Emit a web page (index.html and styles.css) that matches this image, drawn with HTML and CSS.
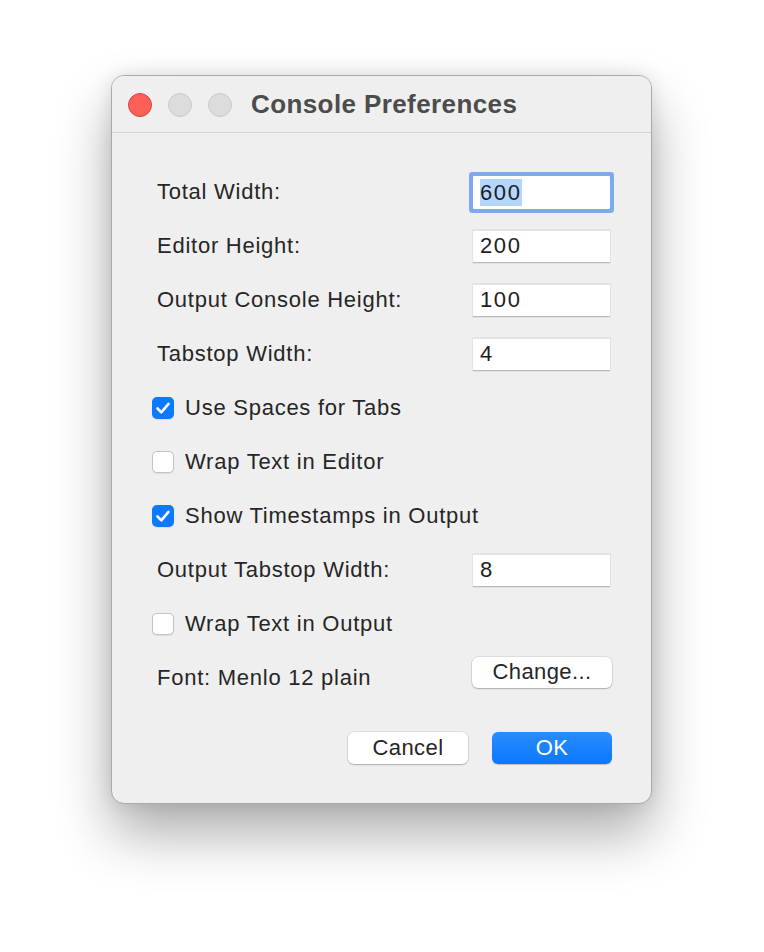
FILE: index.html
```html
<!DOCTYPE html>
<html>
<head>
<meta charset="utf-8">
<link rel="stylesheet" href="styles.css">
</head>
<body>
<div class="window">
  <div class="titlebar">
    <div class="lights">
      <span class="light red"></span>
      <span class="light gray"></span>
      <span class="light gray"></span>
    </div>
    <div class="title">Console Preferences</div>
  </div>
  <div class="content">
    <div class="row">
      <span class="label">Total Width:</span>
      <div class="field focused"><span class="sel">600</span></div>
    </div>
    <div class="row">
      <span class="label">Editor Height:</span>
      <div class="field">200</div>
    </div>
    <div class="row">
      <span class="label">Output Console Height:</span>
      <div class="field">100</div>
    </div>
    <div class="row">
      <span class="label">Tabstop Width:</span>
      <div class="field">4</div>
    </div>
    <div class="row check-row">
      <span class="box checked"><svg viewBox="0 0 22 22" width="22" height="22"><path d="M5.5 11.5 L9.3 15.3 L16.5 6.8" fill="none" stroke="#fff" stroke-width="2.6" stroke-linecap="round" stroke-linejoin="round"/></svg></span>
      <span class="label">Use Spaces for Tabs</span>
    </div>
    <div class="row check-row">
      <span class="box"></span>
      <span class="label">Wrap Text in Editor</span>
    </div>
    <div class="row check-row">
      <span class="box checked"><svg viewBox="0 0 22 22" width="22" height="22"><path d="M5.5 11.5 L9.3 15.3 L16.5 6.8" fill="none" stroke="#fff" stroke-width="2.6" stroke-linecap="round" stroke-linejoin="round"/></svg></span>
      <span class="label">Show Timestamps in Output</span>
    </div>
    <div class="row">
      <span class="label">Output Tabstop Width:</span>
      <div class="field">8</div>
    </div>
    <div class="row check-row">
      <span class="box"></span>
      <span class="label">Wrap Text in Output</span>
    </div>
    <div class="row">
      <span class="label">Font: Menlo 12 plain</span>
      <div class="btn change">Change...</div>
    </div>
    <div class="actions">
      <div class="btn cancel">Cancel</div>
      <div class="btn ok">OK</div>
    </div>
  </div>
</div>
</body>
</html>
```
FILE: styles.css
```css
html, body {
  margin: 0;
  padding: 0;
  background: #ffffff;
}
body {
  width: 764px;
  height: 952px;
  overflow: hidden;
  font-family: "Liberation Sans", Arial, sans-serif;
}
.window {
  margin: 75px 0 0 111px;
  width: 539px;
  height: 727px;
  background: #efefef;
  border: 1px solid #a9a9a9;
  border-radius: 13px;
  box-shadow: 0 30px 55px rgba(0,0,0,0.32), 0 0 18px rgba(0,0,0,0.10);
  overflow: hidden;
}
.titlebar {
  height: 56px;
  border-bottom: 1px solid #d3d3d3;
  background: #efefef;
  display: flex;
  align-items: center;
}
.lights {
  display: flex;
  gap: 16px;
  padding-left: 16px;
  margin-top: 1px;
}
.light {
  width: 24px;
  height: 24px;
  border-radius: 50%;
  box-sizing: border-box;
}
.light.red {
  background: #fe5f57;
  border: 1px solid #e0443e;
}
.light.gray {
  background: #dcdcdc;
  border: 1px solid #cacaca;
}
.title {
  margin-left: 19px;
  font-weight: bold;
  font-size: 26px;
  letter-spacing: 0.4px;
  color: #4c4c4c;
  margin-top: 1px;
}
.content {
  padding: 32px 40px 0 45px;
}
.row {
  height: 54px;
  display: flex;
  align-items: center;
  justify-content: space-between;
}
.label {
  font-size: 22px;
  letter-spacing: 0.75px;
  color: #262626;
}
.check-row {
  justify-content: flex-start;
  margin-left: -5px;
}
.box {
  width: 22px;
  height: 22px;
  border-radius: 5px;
  background: #ffffff;
  border: 1px solid #c4c4c4;
  box-sizing: border-box;
  margin-right: 11px;
  box-shadow: 0 0.5px 1px rgba(0,0,0,0.08);
  display: flex;
  align-items: center;
  justify-content: center;
}
.box.checked {
  background: #0b7aff;
  border: none;
}
.box svg {
  display: block;
}
.field {
  width: 137px;
  height: 33px;
  box-sizing: border-box;
  background: #ffffff;
  border-top: 1px solid #e3e3e3;
  border-bottom: 1px solid #b9b9b9;
  box-shadow: 0 0 0 0.5px #d8d8d8;
  margin-right: 1px;
  font-size: 22px;
  letter-spacing: 1.6px;
  color: #1d1d1d;
  padding-left: 7px;
  display: flex;
  align-items: center;
}
.field.focused {
  border: none;
  border-radius: 1px;
  box-shadow: 0 0 0 4px #7ea9ee;
}
.sel {
  background: #b4d6fe;
  padding: 2px 0;
  line-height: 23px;
}
.btn {
  height: 31px;
  box-sizing: border-box;
  background: #ffffff;
  border-radius: 6px;
  box-shadow: 0 0 0 0.5px rgba(0,0,0,0.14), 0 1px 1.5px rgba(0,0,0,0.22);
  font-size: 22px;
  letter-spacing: 0.4px;
  color: #262626;
  display: flex;
  align-items: center;
  justify-content: center;
}
.change {
  width: 140px;
  margin-top: -12px;
  margin-right: -1px;
}
.actions {
  display: flex;
  justify-content: flex-end;
  gap: 24px;
  margin-top: 27px;
  margin-right: -1px;
}
.cancel {
  width: 120px;
  height: 32px;
}
.ok {
  width: 120px;
  height: 32px;
  background: linear-gradient(#2a8cfd, #0a78fe);
  color: #ffffff;
  box-shadow: 0 0.5px 1px rgba(0,0,0,0.2);
}
```
